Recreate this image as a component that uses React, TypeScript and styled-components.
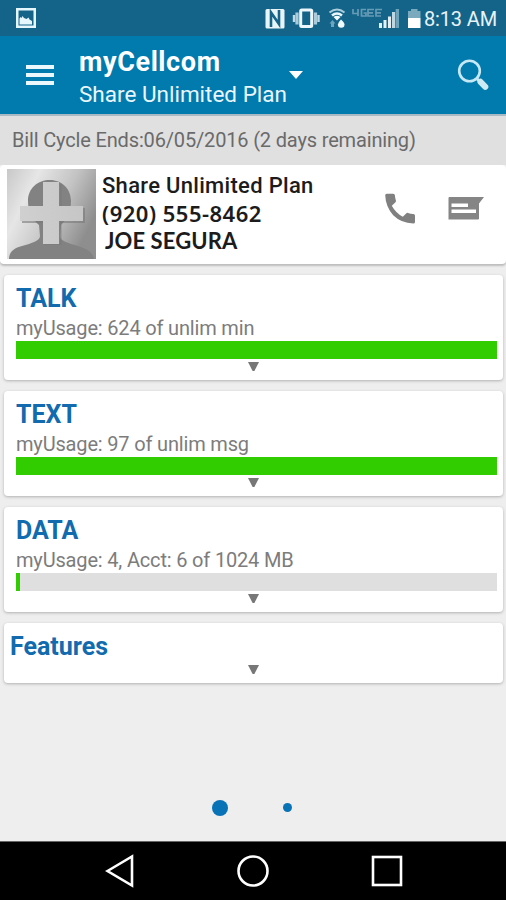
import React from 'react';
import styled, { createGlobalStyle } from 'styled-components';

const Global = createGlobalStyle`
  * { box-sizing: border-box; }
  body { margin: 0; background: #eeeeee; font-family: Roboto, "Liberation Sans", sans-serif; }
`;

const Screen = styled.div`
  width: 506px;
  height: 900px;
  display: flex;
  flex-direction: column;
  background: #eeeeee;
  overflow: hidden;
  white-space: nowrap;
`;

const StatusBar = styled.header`
  height: 36px;
  flex: none;
  display: flex;
  align-items: center;
  justify-content: space-between;
  padding: 0 9px 0 16px;
  background: #146489;
  color: #e8f3f8;
`;

const StatusIcons = styled.div`
  display: flex;
  align-items: center;
  gap: 1px;
`;

const Clock = styled.span`
  width: 73px;
  font-size: 20px;
  line-height: 36px;
  padding-top: 2px;
  letter-spacing: -0.15px;
`;

const AppBar = styled.div`
  height: 78px;
  flex: none;
  display: flex;
  padding: 0 16px 0 26px;
  background: #017aae;
  color: #fff;
`;

const MenuButton = styled.button`
  width: 53px;
  padding: 29px 0 0;
  border: 0;
  background: none;
  display: flex;
  flex-direction: column;
  gap: 4px;
`;

const MenuLine = styled.span`
  width: 28px;
  height: 4px;
  background: #eaf8fd;
`;

const TitleBlock = styled.div`
  width: 210px;
  padding-top: 9px;
`;

const AppTitle = styled.div`
  font-size: 27px;
  line-height: 34px;
  font-weight: 700;
  letter-spacing: 0.6px;
`;

const AppSubtitle = styled.div`
  font-size: 22.5px;
  line-height: 31px;
  color: #eaf6fb;
`;

const Caret = styled.span`
  width: 14px;
  height: 8px;
  margin-top: 35px;
  background: #fff;
  clip-path: polygon(0 0, 100% 0, 50% 100%);
`;

const SearchButton = styled.button`
  margin: 22px 0 0 auto;
  padding: 0;
  border: 0;
  background: none;
  height: 34px;
`;

const CycleStrip = styled.div`
  height: 51px;
  flex: none;
  padding: 0 12px;
  border-top: 2px solid #a9bac5;
  background: #e0e0e0;
  color: #6a6a6a;
  font-size: 20px;
  line-height: 48px;
  letter-spacing: -0.16px;
`;

const AccountCard = styled.section`
  height: 99px;
  flex: none;
  display: flex;
  padding: 4px 20px 0 7px;
  background: #fff;
  border-radius: 4px;
  box-shadow: 0 2px 2px #bdbdbd;
`;

const AccountText = styled.div`
  width: 289px;
  padding: 3px 0 0 6px;
  color: #1c1c1c;
`;

const PlanName = styled.div`
  font-size: 22px;
  line-height: 28px;
  font-weight: 500;
  letter-spacing: 0.3px;
`;

const PhoneNumber = styled.div`
  font-family: "Noto Sans", "Open Sans", sans-serif;
  font-size: 22px;
  line-height: 27px;
  font-weight: 600;
  letter-spacing: 0.5px;
`;

const OwnerName = styled.div`
  font-family: Lato, "Noto Sans", sans-serif;
  font-size: 22px;
  line-height: 27px;
  font-weight: 700;
  padding-left: 3px;
  letter-spacing: 0.1px;
`;

const Actions = styled.div`
  display: flex;
  gap: 32px;
  padding-top: 24px;
`;

const CardList = styled.main`
  flex: 1;
  display: flex;
  flex-direction: column;
  gap: 11px;
  padding: 11px 3px 0 4px;
`;

const Card = styled.section<{ $compact?: boolean }>`
  height: ${(p) => (p.$compact ? 60 : 105)}px;
  padding: ${(p) => (p.$compact ? '9px 6px 0' : '9px 6px 0 12px')};
  background: #fff;
  border-radius: 4px;
  box-shadow: 0 1px 3px #b0b0b0;
`;

const CardTitle = styled.h2`
  margin: 0;
  font-size: 25px;
  line-height: 29px;
  font-weight: 700;
  color: #116bae;
`;

const Usage = styled.div`
  height: 28px;
  padding-top: 1px;
  font-size: 20px;
  line-height: 28px;
  letter-spacing: -0.17px;
  color: #7c7c7c;
`;

const Track = styled.div`
  height: 18px;
  background: #dfdfdf;
`;

const Fill = styled.div<{ $width: string }>`
  width: ${(p) => p.$width};
  height: 100%;
  background: #32cd00;
`;

const Expand = styled.div<{ $compact?: boolean }>`
  width: 11px;
  height: 9px;
  margin: ${(p) => (p.$compact ? '4px 0 0 238px' : '3px 0 0 232px')};
  background: #777;
  clip-path: polygon(0 0, 100% 0, 58% 100%, 42% 100%);
`;

const Pager = styled.div`
  height: 70px;
  flex: none;
  display: flex;
  align-items: center;
  justify-content: center;
  gap: 55px;
  padding: 3px 2px 0 0;
`;

const Dot = styled.span<{ $size: number }>`
  width: ${(p) => p.$size}px;
  height: ${(p) => p.$size}px;
  border-radius: 50%;
  background: #0872b7;
`;

const NavBar = styled.nav`
  height: 59px;
  flex: none;
  display: flex;
  align-items: center;
  justify-content: space-between;
  padding: 0 102px 0 105px;
  background: #000;
  border-top: 1px solid #666;
`;

const PictureIcon = () => (
  <svg width="20" height="20" viewBox="0 0 20 20">
    <path fill="#e6f6fd" fillRule="evenodd" d="M0 0h20v20H0zM2.500 2.500v15h15v-15z" />
    <path fill="#e6f6fd" d="M3.500 16.500v-6l1-1.500 1 1 1-2 1.500 2 2.500 1 2-1.500 1 2 2.500 1.500v3.500z" />
  </svg>
);

const SystemIcons = () => (
  <svg width="158" height="36" viewBox="0 0 158 36">
    <rect x="0.500" y="9" width="19" height="19.500" rx="1.500" fill="#e9f4f8" />
    <path fill="none" stroke="#146489" strokeWidth="2.600" d="M6 27V12.500L14 24V10" />
    <rect x="35.700" y="10" width="11" height="16.500" rx="1" fill="none" stroke="#edf7fb" strokeWidth="3" />
    <path stroke="#a9cbdc" strokeWidth="3.200" d="M32 12.500v12M50.500 12.500v12" />
    <path stroke="#bfd9e5" strokeWidth="2.400" d="M29 15v7M53.500 15v7" />
    <path fill="none" stroke="#a9cddb" strokeWidth="2" d="M64.500 12.500q7.500-6 15 0" />
    <path fill="none" stroke="#e9f7fb" strokeWidth="2.600" d="M67 15.500q5-4 10 0" />
    <path fill="#f4fcff" d="M68.500 17q3.500-2.500 7 0L72 20.500z" />
    <path fill="#6ca5bd" d="M67.500 20l3 3.500h-1.500V27h-3v-3.500h-1.500z" />
    <path fill="#effaff" d="M76 19.500q3.500 3 3.500 5a3.300 3.300 0 0 1-6.600 0q0-2 3.100-5z" />
    <path fill="none" stroke="#669bb5" strokeWidth="1.700" d="M88 9v4.500h5M93 9v7M101 9.500h-4.500v6.500h4.500v-3h-2.500M109 9.500h-6v6.500h6M103 12.800h5M117 9.500h-6v6.500h5M111 12.800h5" />
    <path fill="#e2eff5" d="M114 23h3v5h-3zM118.500 20h3v8h-3zM123 16.500h3V28h-3z" />
    <path fill="#bed7e2" d="M127 12h3.200v16H127z" />
    <path fill="#6fa3ba" d="M130.700 9h3.300v19h-3.300z" />
    <path fill="#7caabd" d="M143 11h3V9h6.500v2h3v7H143z" />
    <path fill="#fff" d="M143 18h12.500v10H143z" />
  </svg>
);

const SearchIcon = () => (
  <svg width="34" height="34" viewBox="0 0 34 34">
    <circle cx="13.500" cy="13" r="10.300" fill="none" stroke="#c6e8f5" strokeWidth="2.600" />
    <path d="M20.500 20.300l4 4" stroke="#c6e8f5" strokeWidth="3" />
    <path d="M24.500 23.800l4.800 5" stroke="#cdebf4" strokeWidth="6" strokeLinecap="round" />
  </svg>
);

const Avatar = () => (
  <svg width="89" height="90" viewBox="0 0 89 90">
    <defs>
      <linearGradient id="backdrop" x1="0" y1="0" x2="1" y2="0.500">
        <stop offset="0" stopColor="#c8c8c8" />
        <stop offset="0.300" stopColor="#e6e6e6" />
        <stop offset="0.650" stopColor="#c3c3c3" />
        <stop offset="1" stopColor="#8e8e8e" />
      </linearGradient>
      <linearGradient id="cross" x1="0" y1="0" x2="1" y2="0">
        <stop offset="0" stopColor="#d0d0d0" />
        <stop offset="1" stopColor="#c6c6c6" />
      </linearGradient>
    </defs>
    <rect width="89" height="90" fill="url(#backdrop)" />
    <path fill="#828282" d="M2 90c0-7 5-11 13-13 10-3 18-5 18-10l-1-11c-7-6-11-14-11-24C21 19 31 11 43 11s21 9 21 21c0 10-4 18-10 24l-1 11c0 5 8 7 18 10 9 3 15 6 16 13z" />
    <path fill="#7a7a7a" opacity=".6" d="M53 15h1.500v23h-1.500zM15 52h21v2H15zM53 52h24v2H53zM76 39h2v15h-2zM37 76h17.500V54H53v21H37z" />
    <path fill="url(#cross)" d="M36 13h16v24h24v15H52v23H36V52H13V37h23z" />
  </svg>
);

const PhoneIcon = () => (
  <svg width="31" height="31" viewBox="0 0 31 31">
    <path fill="#808080" d="M1.700.7h6.500q1.600 0 1.700 1.600.2 2.800 1 5.200.3 1-.4 1.800l-3.700 3.500q4 7.300 11 11l3.600-3.500q.7-.8 1.700-.4 2.500.8 5.200 1 1.700.1 1.700 1.700V29q0 1.500-1.700 1.500Q16 30 8.200 22.200.7 14 .2 2.300.2.700 1.700.7z" />
  </svg>
);

const MessageIcon = () => (
  <svg width="37" height="31" viewBox="0 0 37 31">
    <path fill="#858585" d="M.500 5q0-1 1-1H36l-5 6.500v15q0 1-1 1H.500z" />
    <path fill="#fff" d="M3.500 10.500H20V14H3.500zM3.500 16.500H28V20H3.500z" />
  </svg>
);

const usageCards = [
  { title: 'TALK', usage: 'myUsage: 624 of unlim min', fill: '100%' },
  { title: 'TEXT', usage: 'myUsage: 97 of unlim msg', fill: '100%' },
  { title: 'DATA', usage: 'myUsage: 4, Acct: 6 of 1024 MB', fill: '4px' },
];

export default function App() {
  return (
    <Screen>
      <Global />
      <StatusBar>
        <PictureIcon />
        <StatusIcons>
          <SystemIcons />
          <Clock>8:13 AM</Clock>
        </StatusIcons>
      </StatusBar>
      <AppBar>
        <MenuButton aria-label="Menu">
          <MenuLine />
          <MenuLine />
          <MenuLine />
        </MenuButton>
        <TitleBlock>
          <AppTitle>myCellcom</AppTitle>
          <AppSubtitle>Share Unlimited Plan</AppSubtitle>
        </TitleBlock>
        <Caret />
        <SearchButton aria-label="Search">
          <SearchIcon />
        </SearchButton>
      </AppBar>
      <CycleStrip>Bill Cycle Ends:06/05/2016 (2 days remaining)</CycleStrip>
      <AccountCard>
        <Avatar />
        <AccountText>
          <PlanName>Share Unlimited Plan</PlanName>
          <PhoneNumber>(920) 555-8462</PhoneNumber>
          <OwnerName>JOE SEGURA</OwnerName>
        </AccountText>
        <Actions>
          <PhoneIcon />
          <MessageIcon />
        </Actions>
      </AccountCard>
      <CardList>
        {usageCards.map((c) => (
          <Card key={c.title}>
            <CardTitle>{c.title}</CardTitle>
            <Usage>{c.usage}</Usage>
            <Track>
              <Fill $width={c.fill} />
            </Track>
            <Expand />
          </Card>
        ))}
        <Card $compact>
          <CardTitle>Features</CardTitle>
          <Expand $compact />
        </Card>
      </CardList>
      <Pager>
        <Dot $size={16} />
        <Dot $size={9} />
      </Pager>
      <NavBar>
        <svg width="30" height="34" viewBox="0 0 30 34">
          <path d="M2.500 17L27 2.500v29z" fill="none" stroke="#fff" strokeWidth="2.600" />
        </svg>
        <svg width="34" height="34" viewBox="0 0 34 34">
          <circle cx="17" cy="17" r="14.500" fill="none" stroke="#fff" strokeWidth="2.600" />
        </svg>
        <svg width="34" height="34" viewBox="0 0 34 34">
          <rect x="3" y="3" width="28" height="28" fill="none" stroke="#fff" strokeWidth="2.600" />
        </svg>
      </NavBar>
    </Screen>
  );
}
